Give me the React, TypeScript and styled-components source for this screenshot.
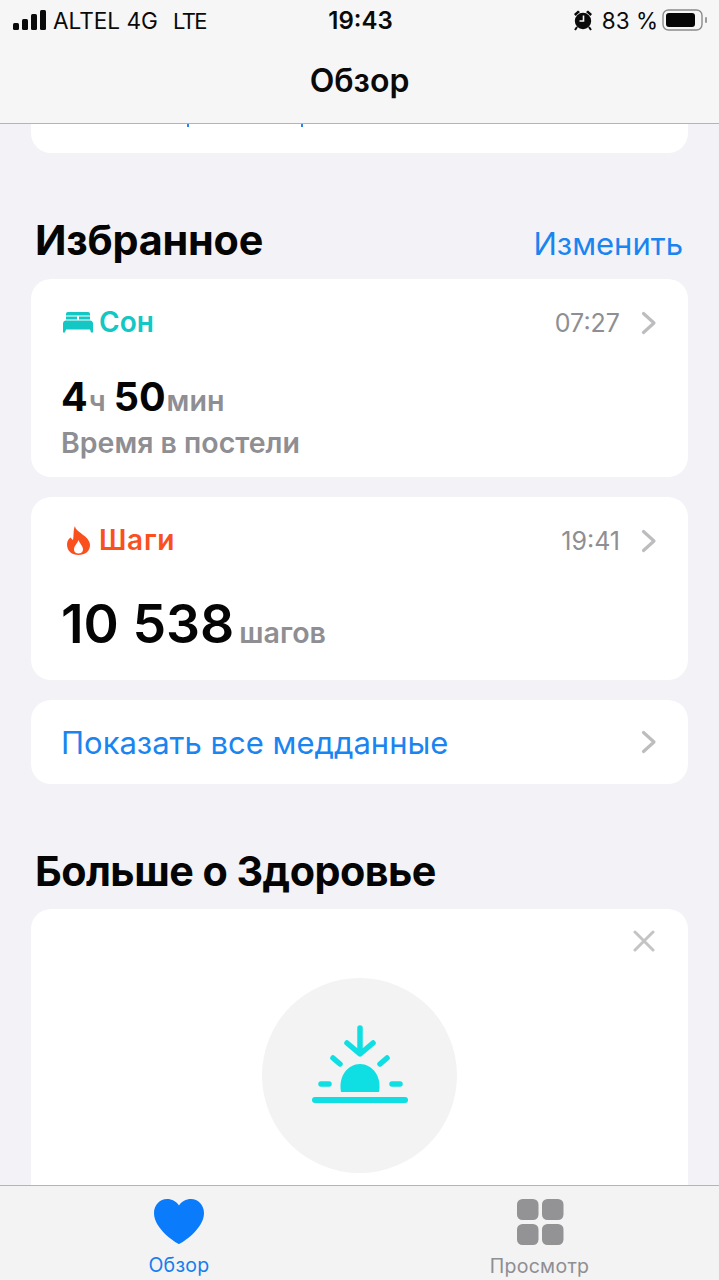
import React from "react";
import styled, { createGlobalStyle } from "styled-components";

const Global = createGlobalStyle`
  html, body { margin: 0; padding: 0; background: #f2f2f7; }
  body { font-family: Inter, "Liberation Sans", sans-serif; }
`;

const Page = styled.div`
  width: 719px;
  height: 1280px;
  display: flex;
  flex-direction: column;
  overflow: hidden;
  background: #f2f2f7;
`;

const Header = styled.header`
  height: 123px;
  flex: none;
  background: #f6f6f7;
  border-bottom: 1px solid #b4b4b6;
  display: flex;
  flex-direction: column;
`;

const StatusBar = styled.div`
  height: 40px;
  padding: 0 11px 0 13px;
  display: grid;
  grid-template-columns: 1fr auto 1fr;
  align-items: center;
  color: #0a0a0a;
`;

const StatusLeft = styled.div`
  display: flex;
  align-items: center;
  gap: 7px;
`;

const Carrier = styled.span`
  font-size: 22.6px;
  font-weight: 400;
  white-space: nowrap;
`;

const Network = styled.span`
  font-size: 22px;
  letter-spacing: -1.6px;
  margin-left: 15px;
`;

const Clock = styled.div`
  font-size: 24px;
  font-weight: 600;
`;

const StatusRight = styled.div`
  display: flex;
  align-items: center;
  justify-content: flex-end;
  gap: 4px;
  font-size: 22.5px;
`;

const Percent = styled.span`
  margin-left: 5px;
`;

const NavTitle = styled.h1`
  margin: 0;
  text-align: center;
  font-size: 32px;
  font-weight: 600;
  line-height: 36px;
  margin-top: 23px;
  color: #0a0a0a;
`;

const Scroll = styled.main`
  flex: 1;
  min-height: 0;
  padding: 0 31px;
  overflow: hidden;
  display: flex;
  flex-direction: column;
`;

const Card = styled.section`
  background: #fff;
  border-radius: 20px;
`;

const TopStub = styled(Card)`
  height: 29px;
  border-radius: 0 0 20px 20px;
  position: relative;
`;

const Descender = styled.i<{ $left: number }>`
  position: absolute;
  top: 0;
  left: ${(p) => p.$left}px;
  width: 2px;
  height: 3px;
  background: #2c82e8;
`;

const SectionHead = styled.div<{ $top: number; $bottom: number }>`
  display: flex;
  justify-content: space-between;
  align-items: baseline;
  padding: 0 5px 0 4px;
  margin-top: ${(p) => p.$top}px;
  margin-bottom: ${(p) => p.$bottom}px;
  height: 50px;
`;

const SectionTitle = styled.h2<{ $track: number }>`
  margin: 0;
  font-size: 41.3px;
  font-weight: 700;
  line-height: 50px;
  color: #050505;
  letter-spacing: ${(p) => p.$track}px;
`;

const EditLink = styled.a`
  font-size: 31px;
  color: #1a84f0;
  line-height: 50px;
`;

const MetricCard = styled(Card)<{ $h: number }>`
  height: ${(p) => p.$h}px;
  padding: 0 31px;
  margin-bottom: 20px;
  display: flex;
  flex-direction: column;
`;

const MetricHead = styled.div`
  display: flex;
  align-items: center;
  height: 87px;
`;

const MetricName = styled.span<{ $c: string; $track: number }>`
  color: ${(p) => p.$c};
  font-size: 28px;
  font-weight: 600;
  letter-spacing: ${(p) => p.$track}px;
  margin-left: 5px;
  margin-bottom: 2px;
`;

const MetricTime = styled.span`
  margin-left: auto;
  font-size: 25px;
  color: #8e8e93;
  margin-right: 21px;
`;

const ValueRow = styled.div`
  display: flex;
  align-items: baseline;
  margin: 7px 0 0 -1px;
`;

const Num = styled.span<{ $s: number; $w: number }>`
  font-size: ${(p) => p.$s}px;
  font-weight: ${(p) => p.$w};
  color: #050505;
`;

const Unit = styled.span<{ $l: number; $r: number }>`
  font-size: 28.6px;
  font-weight: 600;
  color: #8e8e93;
  margin: 0 ${(p) => p.$r}px 0 ${(p) => p.$l}px;
`;

const SubLabel = styled.div`
  font-size: 28.5px;
  font-weight: 600;
  color: #8e8e93;
  margin: 4px 0 0 -1px;
`;

const LinkRow = styled(Card)`
  height: 84px;
  padding: 0 31px;
  display: flex;
  align-items: center;
  justify-content: space-between;
`;

const LinkText = styled.span`
  font-size: 31px;
  color: #1a84f0;
  margin-left: -1px;
`;

const PromoCard = styled(Card)`
  margin-top: 0;
  flex: 1;
  border-radius: 20px 20px 0 0;
  position: relative;
  display: flex;
  justify-content: center;
  padding-top: 69px;
`;

const CloseIcon = styled.svg`
  position: absolute;
  top: 21px;
  right: 33px;
`;

const SunCircle = styled.div`
  width: 195px;
  height: 195px;
  border-radius: 50%;
  background: #f3f3f4;
  display: flex;
  align-items: center;
  justify-content: center;
  padding-bottom: 24px;
  box-sizing: border-box;
`;

const TabBar = styled.nav`
  height: 94px;
  flex: none;
  background: #f3f3f4;
  border-top: 1px solid #b4b4b6;
  display: grid;
  grid-template-columns: 358px 361px;
`;

const Tab = styled.div<{ $c: string; $inset: number }>`
  display: flex;
  flex-direction: column;
  align-items: center;
  color: ${(p) => p.$c};
  font-size: 19.5px;
  padding: 13px 0 0 ${(p) => p.$inset}px;
`;

const TabLabel = styled.span`
  margin-top: 8px;
  line-height: 24px;
  letter-spacing: 0.3px;
`;

const Chevron = () => (
  <svg width="16" height="24" viewBox="0 0 16 24" fill="none">
    <path d="M2.5 2.5 L13 12 L2.5 21.5" stroke="#bdbdc0" strokeWidth="3.2" strokeLinecap="round" strokeLinejoin="round" />
  </svg>
);

export default function App() {
  return (
    <Page>
      <Global />
      <Header>
        <StatusBar>
          <StatusLeft>
            <svg width="33" height="20" viewBox="0 0 33 20" fill="#0a0a0a">
              <rect x="0" y="13" width="6" height="7" rx="1.5" />
              <rect x="9" y="9" width="6" height="11" rx="1.5" />
              <rect x="18" y="4" width="6" height="16" rx="1.5" />
              <rect x="27" y="0" width="6" height="20" rx="1.5" />
            </svg>
            <Carrier>ALTEL 4G<Network>LTE</Network></Carrier>
          </StatusLeft>
          <Clock>19:43</Clock>
          <StatusRight>
            <svg width="20" height="22" viewBox="0 0 20 22" fill="#0a0a0a">
              <circle cx="10" cy="12" r="8.2" />
              <path d="M1 5 L5 1.5 L7 3 L2.5 7 Z M19 5 L15 1.5 L13 3 L17.5 7 Z" />
              <path d="M4 18 L2 21 M16 18 L18 21" stroke="#0a0a0a" strokeWidth="2" />
              <path d="M10.5 6.5 V12 H6.5" stroke="#f6f6f7" strokeWidth="1.6" fill="none" />
            </svg>
            <Percent>83 %</Percent>
            <svg width="46" height="22" viewBox="0 0 46 22" fill="none">
              <rect x="1" y="1" width="39" height="20" rx="5.5" stroke="#8b8b8d" strokeWidth="1.4" />
              <rect x="4" y="4" width="29" height="14" rx="3" fill="#050505" />
              <rect x="43" y="8" width="2" height="6" rx="1" fill="#9a9a9c" />
            </svg>
          </StatusRight>
        </StatusBar>
        <NavTitle>Обзор</NavTitle>
      </Header>
      <Scroll>
        <TopStub>
          <Descender $left={156} />
          <Descender $left={270} />
        </TopStub>
        <SectionHead $top={62} $bottom={14}>
          <SectionTitle $track={-0.2}>Избранное</SectionTitle>
          <EditLink>Изменить</EditLink>
        </SectionHead>
        <MetricCard $h={198}>
          <MetricHead>
            <svg width="32" height="21" viewBox="0 0 32 21" fill="#12c7c4">
              <path d="M4 1.5 Q4 0 6 0 H26 Q28 0 28 1.5 V3.5 H4 Z" />
              <path d="M4 4.5 H15 V7.5 H4 Z M17 4.5 H28 V7.5 H17 Z" />
              <path d="M1 11 Q1.5 8.5 3.5 8.5 H28.5 Q30.5 8.5 31 11 V20.5 H29 L28 17.5 H4 L3 20.5 H1 Z" />
            </svg>
            <MetricName $c="#12c7c4" $track={0}>Сон</MetricName>
            <MetricTime>07:27</MetricTime>
            <Chevron />
          </MetricHead>
          <ValueRow>
            <Num $s={39.5} $w={700}>4</Num>
            <Unit $l={1} $r={8}>ч</Unit>
            <Num $s={39.5} $w={700}>50</Num>
            <Unit $l={1} $r={0}>мин</Unit>
          </ValueRow>
          <SubLabel>Время в постели</SubLabel>
        </MetricCard>
        <MetricCard $h={183}>
          <MetricHead>
            <svg width="32" height="30" viewBox="0 0 32 30" fill="#f9501e">
              <path fillRule="evenodd" d="M13 0 C13 6 28 10 28 19 C28 25.5 23 29 16.5 29 C10 29 5 25 5 18.5 C5 15 6.5 13 8.5 11.5 C9.5 12.5 10 13.5 11 14 C12 10 11 4 13 0 Z M16.5 14 C15 18 12 20 12 23.5 C12 26 14 27.5 16.5 27.5 C19 27.5 21 26 21 23.5 C21 20 18 18 16.5 14 Z" />
            </svg>
            <MetricName $c="#f9501e" $track={0.7}>Шаги</MetricName>
            <MetricTime>19:41</MetricTime>
            <Chevron />
          </MetricHead>
          <ValueRow>
            <Num $s={53.5} $w={600}>10 538</Num>
            <Unit $l={5} $r={0}>шагов</Unit>
          </ValueRow>
        </MetricCard>
        <LinkRow>
          <LinkText>Показать все медданные</LinkText>
          <Chevron />
        </LinkRow>
        <SectionHead $top={62} $bottom={13}>
          <SectionTitle $track={-0.54}>Больше о Здоровье</SectionTitle>
        </SectionHead>
        <PromoCard>
          <CloseIcon width="22" height="22" viewBox="0 0 22 22">
            <path d="M2 2 L20 20 M20 2 L2 20" stroke="#c4c4c6" strokeWidth="3" strokeLinecap="round" />
          </CloseIcon>
          <SunCircle>
            <svg width="96" height="80" viewBox="0 0 96 80" fill="#0fdfe3">
              <path d="M48 4 V29 M35 19 L48 30 L61 19" stroke="#0fdfe3" strokeWidth="5.5" strokeLinecap="round" strokeLinejoin="round" fill="none" />
              <path d="M21 34 L28 40 M75 34 L68 40" stroke="#0fdfe3" strokeWidth="5.5" strokeLinecap="round" />
              <path d="M9 60 H17 M80 60 H88" stroke="#0fdfe3" strokeWidth="5.5" strokeLinecap="round" />
              <path d="M29 68 C26 52 36 40 48 40 C60 40 70 52 67 68 Z" />
              <rect x="0" y="73" width="96" height="6" rx="3" />
            </svg>
          </SunCircle>
        </PromoCard>
      </Scroll>
      <TabBar>
        <Tab $c="#147eee" $inset={0}>
          <svg width="50" height="46" viewBox="0 0 50 46" fill="#0a7bfb">
            <path d="M25 45 C22 44 0 30 0 14 C0 6 6 0 13 0 C18 0 22.5 2.5 25 6.5 C27.5 2.5 32 0 37 0 C44 0 50 6 50 14 C50 30 28 44 25 45 Z" />
          </svg>
          <TabLabel>Обзор</TabLabel>
        </Tab>
        <Tab $c="#8e8e93" $inset={2}>
          <svg width="48" height="47" viewBox="0 0 48 47" fill="#939395">
            <rect x="1" y="0" width="21.5" height="21" rx="5.5" />
            <rect x="26" y="0" width="21.5" height="21" rx="5.5" />
            <rect x="1" y="25" width="21.5" height="21" rx="5.5" />
            <rect x="26" y="25" width="21.5" height="21" rx="5.5" />
          </svg>
          <TabLabel>Просмотр</TabLabel>
        </Tab>
      </TabBar>
    </Page>
  );
}
